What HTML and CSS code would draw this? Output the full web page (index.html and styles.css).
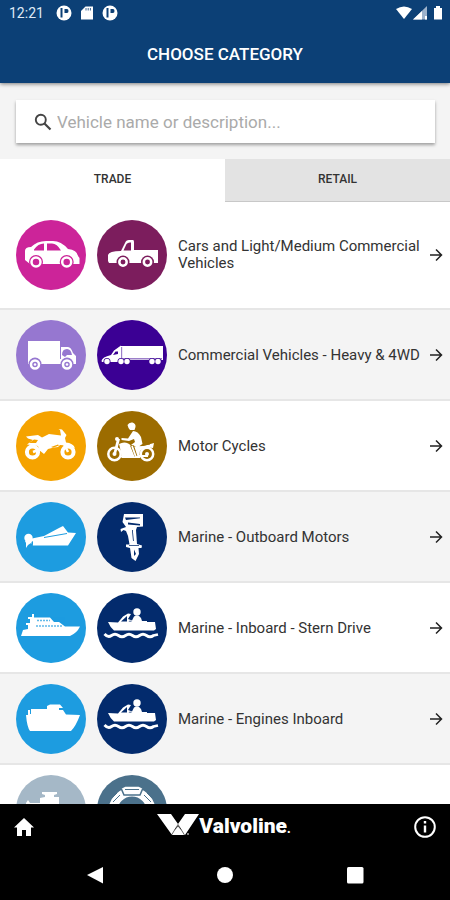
FILE: index.html
```html
<!DOCTYPE html>
<html lang="en">
<head>
<meta charset="utf-8">
<meta name="viewport" content="width=device-width, initial-scale=1">
<title>Choose category</title>
<link rel="stylesheet" href="styles.css">
</head>
<body>
<header class="top">
  <div class="status">
    <span class="time">12:21</span>
    <svg class="status-icon" viewBox="0 0 16 16"><circle cx="8" cy="8" r="7.500" fill="#fff"/><path d="M5.500 3V12.500" stroke="#0c4076" stroke-width="2"/><path d="M8.500 4H11Q12.500 4 12.500 6T11 8H8.500z" fill="#0c4076"/></svg>
    <svg class="status-icon" viewBox="0 0 16 16"><path d="M6.500 1.500H14V14.500H2V6z" fill="#fff"/><path d="M7 3v2.500M9.200 3v2.500M11.400 3v2.500" stroke="#0c4076" stroke-width=".8"/></svg>
    <svg class="status-icon" viewBox="0 0 16 16"><circle cx="8" cy="8" r="7.500" fill="#fff"/><path d="M5.500 3V12.500" stroke="#0c4076" stroke-width="2"/><path d="M8.500 4H11Q12.500 4 12.500 6T11 8H8.500z" fill="#0c4076"/></svg>
    <svg class="signals" viewBox="0 0 48 16"><path d="M0 4Q8-1 16 4L8 14z" fill="#fff"/><path d="M17 14.500L31 1V14.500z" fill="#9db2cb"/><path d="M17 14.500L26 6V14.500zM29 11h2v3.500h-2z" fill="#fff"/><path d="M38 3H40V1H44V3H46V14.500H38z" fill="#fff"/></svg>
  </div>
  <h1>CHOOSE CATEGORY</h1>
</header>
<main>
  <form class="search">
    <label class="search-box">
      <svg class="search-icon" viewBox="0 0 18 18"><circle cx="6.800" cy="6.800" r="5" fill="none" stroke="#444" stroke-width="1.900"/><path d="M10.500 10.500L16.500 16.500" stroke="#444" stroke-width="2.200"/></svg>
      <input type="search" aria-label="Search vehicles" placeholder="Vehicle name or description...">
    </label>
  </form>
  <div class="tabs" role="tablist">
    <button class="tab active" role="tab" aria-selected="true">TRADE</button>
    <button class="tab" role="tab" aria-selected="false">RETAIL</button>
  </div>
  <nav class="list" aria-label="Categories">
    <a class="row first" href="#cars">
      <svg class="badge pink" viewBox="0 0 70 70"><path fill="#fff" d="M9 38V31Q9 27 15 27Q21 21 30 21H37Q45 21 52 29Q61 30 62 36L63.500 38V44H14L9 40z"/><path class="cut" d="M18 29.500Q22 23.500 28 23.500V30.500H18zM31 23.500H36Q41 23.500 45 30.500H31z"/><circle class="hub" cx="20" cy="42" r="7"/><circle class="hub" cx="50.700" cy="42" r="7"/><circle class="ring" cx="20" cy="42" r="4.500"/><circle class="ring" cx="50.700" cy="42" r="4.500"/></svg>
      <svg class="badge plum" viewBox="0 0 70 70"><path fill="#fff" d="M11 41V35Q12 31 24 31L28 23Q29 20 32 20H36Q37 20 37 22V30H61V43H12z"/><path class="cut" d="M26.500 30.500L29.500 24Q31 22 34 22.500V30.500z"/><circle class="hub" cx="26" cy="42" r="6.500"/><circle class="hub" cx="50.500" cy="42" r="6.500"/><circle class="ring" cx="26" cy="42" r="3.700"/><circle class="ring" cx="50.500" cy="42" r="3.700"/></svg>
      <span class="name">Cars and Light/Medium Commercial Vehicles</span>
      <svg class="arrow" viewBox="0 0 14 14"><path d="M1 7H12M7 1.500L12.500 7L7 12.500"/></svg>
    </a>
    <a class="row" href="#heavy">
      <svg class="badge lilac" viewBox="0 0 70 70"><path fill="#fff" d="M12 21H44V27H52Q55 27 57 33L60 36V44H12z"/><path class="cut" d="M46 35Q46 29 51 29Q55 29 56 35H51L49 37zM44 27h1v12h-1z"/><circle class="hub" cx="19" cy="44" r="6.500"/><circle class="hub" cx="51" cy="44" r="6.500"/><circle class="ring" cx="19" cy="44.500" r="4"/><circle class="ring" cx="51" cy="44.500" r="4"/><circle cx="19" cy="44.500" r="1.300" fill="#fff"/><circle cx="51" cy="44.500" r="1.300" fill="#fff"/></svg>
      <svg class="badge violet" viewBox="0 0 70 70"><path fill="#fff" d="M4.500 41Q5 37 14 35L17 30.500L24 25.500V26H66V40H62V42H53V40H33V42H5z"/><path class="cut" d="M16 35L18.500 31.500H21V34zM24.500 27h.6v12h-.6zM26 38.500h39v.7H26z"/><g class="hub"><circle cx="10" cy="41.500" r="3.500"/><circle cx="24" cy="41.500" r="3.500"/><circle cx="30" cy="41.500" r="3.500"/><circle cx="55" cy="41.500" r="3.500"/><circle cx="61" cy="41.500" r="3.500"/></g><g fill="#fff"><circle cx="10" cy="41.500" r="2.700"/><circle cx="24" cy="41.500" r="2.700"/><circle cx="30" cy="41.500" r="2.700"/><circle cx="55" cy="41.500" r="2.700"/><circle cx="61" cy="41.500" r="2.700"/></g></svg>
      <span class="name">Commercial Vehicles - Heavy &amp; 4WD</span>
      <svg class="arrow" viewBox="0 0 14 14"><path d="M1 7H12M7 1.500L12.500 7L7 12.500"/></svg>
    </a>
    <a class="row" href="#motorcycles">
      <svg class="badge amber" viewBox="0 0 70 70"><circle class="ring thick" cx="16.500" cy="41" r="5.600"/><circle class="ring thick" cx="52" cy="41" r="5.600"/><path fill="#fff" d="M10 25.500L22 24L26 26.500L33 23L41 24L45 24.500L44 19L42.500 18L46 18.500L50.500 24L49 27L50 31.500Q57 32 59 37L50 34.500L44 34L42 36L38 36.500L32 38L28 43L23 39L22 35L15 34L11 33.500L17 29L12 27.500z"/><path class="cut" d="M13 32L18 28.500L22 29L20 32zM35 36L42 33.500L43 34.500L37 36.700z"/><path d="M47 31L52 41M17 41L25 38" stroke="#fff" stroke-width="2.500"/></svg>
      <svg class="badge bronze" viewBox="0 0 70 70"><circle class="ring" cx="17.500" cy="43" r="6.200"/><circle class="ring" cx="50" cy="43" r="6.200"/><circle cx="17.500" cy="43" r="2" fill="#fff"/><circle cx="50" cy="43" r="2" fill="#fff"/><path fill="#fff" d="M30.500 14Q32 11 35.500 11.500Q39 12.500 38.500 16L37.500 19H33L31.500 17zM36 20Q41 20 44 26L45.500 33L41 36L34 34L38 31L37 28L32 30L24.500 29V27L31 27.500zM22 33Q29 29 35 35.500L46 35L57 32L56 37Q48 35 43 40L42 47H25L23 37zM16.500 42L20 28H23L19 43z"/><path class="cut" d="M33 34.500H37L40.500 45.500H37.500zM44 34L53 32.500V33.500L45 35z"/><path d="M35 35L39 46H43M42 45H51M24 45.500H30" stroke="#fff" stroke-width="1.800" fill="none"/><circle cx="20" cy="28" r="2" fill="#fff"/></svg>
      <span class="name">Motor Cycles</span>
      <svg class="arrow" viewBox="0 0 14 14"><path d="M1 7H12M7 1.500L12.500 7L7 12.500"/></svg>
    </a>
    <a class="row" href="#outboard">
      <svg class="badge sky" viewBox="0 0 70 70"><path fill="#fff" d="M16 36.500L28 34L43 26L47 24L52 30.500L60 31L52 43.500H17L15 41L12 43L10 46V41L9 39z"/><circle cx="12.500" cy="36" r="4.200" fill="#fff"/><path class="cut" d="M28 35L51 31V32L28 36zM15.500 40L17 39V43.500L15.500 42z"/></svg>
      <svg class="badge navy" viewBox="0 0 70 70"><path fill="#fff" d="M27 12H46V24.500L40 25L39 28L40 42L45 43.500L44.500 46H41.500L42 52L38.500 59L34.500 56L33 46L29 45V42.500H32.500L31 34L29 29L26.500 28L24 30L23.500 27L29 25L25.500 20z"/><path class="cut" d="M28 15.500H43V16.200L29 18zM31 20.500L43 22V23.500L31 22.500zM35 28H35.800L36.800 39H36zM32 43.300H42V44.100H32zM37 47.500L39 52L37 54z"/></svg>
      <span class="name">Marine - Outboard Motors</span>
      <svg class="arrow" viewBox="0 0 14 14"><path d="M1 7H12M7 1.500L12.500 7L7 12.500"/></svg>
    </a>
    <a class="row" href="#sterndrive">
      <svg class="badge sky" viewBox="0 0 70 70"><path fill="#fff" d="M5 43L7 37L12 36V32H10V30H14V26H12V24H16V21H18V24.500H34L38 29H43L49 33.500H64Q61 40 54 43z"/><path d="M21 27.500H34M20 33H46" stroke="#1d9ce0" stroke-width="1.400" stroke-dasharray="2 1" opacity=".7"/></svg>
      <svg class="badge navy" viewBox="0 0 70 70"><path fill="#fff" d="M11 29L21 29.500L26 23.500L31 20.500L34 21L31 26L35 27.500L37 23.500Q41 21 44 25L45 28H50V29H58L59 36L57 37.500H17Q13 34 11 29z"/><circle cx="40" cy="19" r="3.700" fill="#fff"/><path class="cut" d="M24 28.500L30 23V28.500zM31.500 28.500L33 27.500L35 28.500z"/><path d="M7.500 41Q11 45 14.500 42.500T21.500 42.500T28.500 42.500T35.500 42.500T42.500 42.500T49.500 42.500T56.500 42.500L61 41.500" fill="none" stroke="#fff" stroke-width="2.800"/></svg>
      <span class="name">Marine - Inboard - Stern Drive</span>
      <svg class="arrow" viewBox="0 0 14 14"><path d="M1 7H12M7 1.500L12.500 7L7 12.500"/></svg>
    </a>
    <a class="row" href="#inboard">
      <svg class="badge sky" viewBox="0 0 70 70"><path fill="#fff" d="M10 31H12V26H14V30H15V25H31V22L34 20.500H44L47 24H43V26H47L50 30.500L64 31Q60 42 55 47H14Q11 43 10 31z"/></svg>
      <svg class="badge navy" viewBox="0 0 70 70"><path fill="#fff" d="M11 29L21 29.500L26 23.500L31 20.500L34 21L31 26L35 27.500L37 23.500Q41 21 44 25L45 28H50V29H58L59 36L57 37.500H17Q13 34 11 29z"/><circle cx="40" cy="19" r="3.700" fill="#fff"/><path class="cut" d="M24 28.500L30 23V28.500zM31.500 28.500L33 27.500L35 28.500z"/><path d="M7.500 41Q11 45 14.500 42.500T21.500 42.500T28.500 42.500T35.500 42.500T42.500 42.500T49.500 42.500T56.500 42.500L61 41.500" fill="none" stroke="#fff" stroke-width="2.800"/></svg>
      <span class="name">Marine - Engines Inboard</span>
      <svg class="arrow" viewBox="0 0 14 14"><path d="M1 7H12M7 1.500L12.500 7L7 12.500"/></svg>
    </a>
    <a class="row" href="#ships" aria-label="More marine">
      <svg class="badge mist" viewBox="0 0 70 70"><path fill="#fff" d="M26 17H41V19L38 20V22H43V34H60L52 50H16L10 34V28L12 25L14 28H24V23L29 22V20L26 19z"/></svg>
      <svg class="badge steel" viewBox="0 0 70 70"><circle cx="35" cy="36" r="19" fill="none" stroke="#fff" stroke-width="9"/><path d="M24 13L28 11H42L46 13L43 20H27z" fill="#fff" stroke="#4b718b" stroke-width="1.500"/><path d="M28 14.500H42M13 25L20 18M16 27L23 20M50 18L57 25M47 20L54 27" stroke="#4b718b" stroke-width="1"/></svg>
    </a>
  </nav>
</main>
<footer>
  <div class="brand-bar">
    <button class="icon-button" aria-label="Home"><svg class="home" viewBox="0 0 20 18"><path fill="#fff" d="M10 0L20 9.500H17V18H12V12H8V18H3V9.500H0z"/></svg></button>
    <div class="brand"><svg class="mark" viewBox="0 0 42 22"><path fill="#fff" d="M0 0H14L21 10L28 0H42L28 21H15z"/><path d="M14.500 21L21 10.500L27.500 21M18 15.500L21 12L24 15.500" fill="none" stroke="#000" stroke-width=".6"/><path d="M30 20h2" stroke="#fff"/></svg><span class="wordmark">Valvoline<small>.</small></span></div>
    <button class="icon-button" aria-label="Information"><svg class="info" viewBox="0 0 22 22"><circle cx="11" cy="11" r="9.800" fill="none" stroke="#fff" stroke-width="2"/><path d="M11 5V7.500M11 9.500V16.500" stroke="#fff" stroke-width="2.400"/></svg></button>
  </div>
  <div class="system-nav">
    <button class="icon-button" aria-label="Back"><svg class="sys" viewBox="0 0 18 18"><path fill="#fff" d="M17 1V17.500L1 9z"/></svg></button>
    <button class="icon-button" aria-label="Home screen"><svg class="sys" viewBox="0 0 18 18"><circle cx="9" cy="9" r="8" fill="#fff"/></svg></button>
    <button class="icon-button" aria-label="Recent apps"><svg class="sys" viewBox="0 0 18 18"><rect x="1" y="1" width="16.500" height="16.500" rx="1.500" fill="#fff"/></svg></button>
  </div>
</footer>
</body>
</html>
```
FILE: styles.css
```css
* { box-sizing: border-box; }

body {
  margin: 0;
  height: 100vh;
  display: flex;
  flex-direction: column;
  overflow: hidden;
  font-family: Roboto, "Liberation Sans", sans-serif;
  color: #333;
  background: #fff;
}

svg { display: block; flex: none; }

button {
  border: 0;
  padding: 0;
  background: none;
  font: inherit;
  color: inherit;
}

.top {
  position: relative;
  z-index: 1;
  flex: none;
  color: #fff;
  background: #0c4076;
  box-shadow: 0 1px 4px rgba(0, 0, 0, 0.5);
}

.status {
  display: flex;
  align-items: center;
  height: 26px;
  padding: 0 6px 0 9px;
  gap: 7px;
}

.time { font-size: 14px; line-height: 26px; margin-right: 5px; color: #dfe9f5; }
.status-icon { width: 16px; height: 16px; }
.signals { width: 48px; height: 16px; margin-left: auto; }

h1 {
  margin: 0;
  padding: 20px 0;
  font: 500 17px/17px Roboto, sans-serif;
  text-align: center;
}

main { flex: 1; min-height: 0; overflow: hidden; }

.search { padding: 17px 15px 16px 16px; background: #f4f4f4; }

.search-box {
  display: flex;
  align-items: center;
  gap: 5px;
  height: 43px;
  padding: 0 18px;
  background: #fff;
  box-shadow: 0 2px 3px rgba(0, 0, 0, 0.35);
}

.search-icon { width: 18px; height: 18px; }

.search-box input {
  flex: 1;
  min-width: 0;
  border: 0;
  padding: 0;
  outline: 0;
  background: none;
  font: 17px/24px Roboto, sans-serif;
}

.search-box input::placeholder { color: #aaa; opacity: 1; }

.tabs { display: grid; grid-template-columns: 1fr 1fr; }

.tab {
  height: 43px;
  padding-bottom: 2px;
  font-size: 12px;
  font-weight: 500;
  background: #e3e3e3;
  border-bottom: 1px solid #c8c8c8;
}

.tab.active { background: #fff; border-color: #fff; }

.row {
  display: flex;
  align-items: center;
  padding: 10px 7px 9px 16px;
  border-bottom: 2px solid #e6e6e6;
  color: #333;
  text-decoration: none;
}

.row.first { padding-top: 18px; padding-bottom: 18px; }
.row:nth-child(even) { background: #f4f4f4; }

.badge {
  width: 70px;
  height: 70px;
  margin-right: 11px;
  border-radius: 50%;
  color: var(--tone);
  background: var(--tone);
}

.pink { --tone: #cc2499; }
.plum { --tone: #7c1d5d; }
.lilac { --tone: #9677d0; }
.violet { --tone: #3b0094; }
.amber { --tone: #f5a300; }
.bronze { --tone: #9c6c00; }
.sky { --tone: #1d9ce0; }
.navy { --tone: #032b6d; }
.mist { --tone: #a5b8c7; }
.steel { --tone: #4b718b; }

.cut, .hub { fill: currentColor; }
.ring { fill: none; stroke: #fff; stroke-width: 2.5; }
.ring.thick { stroke-width: 4; }

.name { flex: 1; font-size: 15px; line-height: 17px; }
.arrow { width: 14px; height: 14px; fill: none; stroke: #222; stroke-width: 1.5; }

footer { flex: none; background: #000; color: #fff; }

.brand-bar {
  display: flex;
  align-items: center;
  justify-content: space-between;
  height: 46px;
  padding: 0 14px;
}

.home { width: 20px; height: 18px; }
.info { width: 22px; height: 22px; }
.brand { display: flex; align-items: center; }
.mark { width: 42px; height: 22px; margin-bottom: 4px; }
.wordmark { font: 900 21px/24px Roboto, sans-serif; }
.wordmark small { font-size: 12px; }

.system-nav {
  display: flex;
  align-items: center;
  justify-content: center;
  gap: 112px;
  height: 50px;
}

.sys { width: 18px; height: 18px; }
```
